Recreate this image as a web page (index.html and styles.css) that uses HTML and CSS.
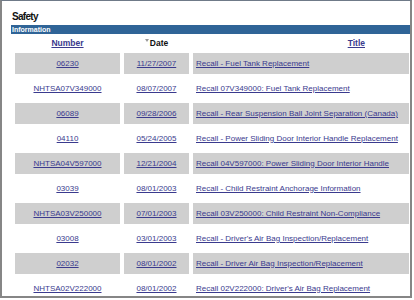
FILE: index.html
```html
<!DOCTYPE html>
<html>
<head>
<meta charset="utf-8">
<link rel="stylesheet" href="styles.css">
</head>
<body>
<div class="frame">
  <h1 class="title">Safety</h1>
  <div class="bar">Information</div>
  <table class="list">
    <colgroup><col class="c-num"><col class="c-date"><col class="c-title"></colgroup>
    <thead>
      <tr>
        <th><a href="#">Number</a></th>
        <th class="sorted"><span class="arrow"></span>Date</th>
        <th class="th-title"><a href="#">Title</a></th>
      </tr>
    </thead>
    <tbody>
      <tr class="alt"><td class="num"><a href="#">06230</a></td><td class="date"><a href="#">11/27/2007</a></td><td class="ttl"><a href="#">Recall - Fuel Tank Replacement</a></td></tr>
      <tr><td class="num"><a href="#">NHTSA07V349000</a></td><td class="date"><a href="#">08/07/2007</a></td><td class="ttl"><a href="#">Recall 07V349000: Fuel Tank Replacement</a></td></tr>
      <tr class="alt"><td class="num"><a href="#">06089</a></td><td class="date"><a href="#">09/28/2006</a></td><td class="ttl"><a href="#">Recall - Rear Suspension Ball Joint Separation (Canada)</a></td></tr>
      <tr><td class="num"><a href="#">04110</a></td><td class="date"><a href="#">05/24/2005</a></td><td class="ttl"><a href="#">Recall - Power Sliding Door Interior Handle Replacement</a></td></tr>
      <tr class="alt"><td class="num"><a href="#">NHTSA04V597000</a></td><td class="date"><a href="#">12/21/2004</a></td><td class="ttl"><a href="#">Recall 04V597000: Power Sliding Door Interior Handle</a></td></tr>
      <tr><td class="num"><a href="#">03039</a></td><td class="date"><a href="#">08/01/2003</a></td><td class="ttl"><a href="#">Recall - Child Restraint Anchorage Information</a></td></tr>
      <tr class="alt"><td class="num"><a href="#">NHTSA03V250000</a></td><td class="date"><a href="#">07/01/2003</a></td><td class="ttl"><a href="#">Recall 03V250000: Child Restraint Non-Compliance</a></td></tr>
      <tr><td class="num"><a href="#">03008</a></td><td class="date"><a href="#">03/01/2003</a></td><td class="ttl"><a href="#">Recall - Driver's Air Bag Inspection/Replacement</a></td></tr>
      <tr class="alt"><td class="num"><a href="#">02032</a></td><td class="date"><a href="#">08/01/2002</a></td><td class="ttl"><a href="#">Recall - Driver Air Bag Inspection/Replacement</a></td></tr>
      <tr><td class="num"><a href="#">NHTSA02V222000</a></td><td class="date"><a href="#">08/01/2002</a></td><td class="ttl"><a href="#">Recall 02V222000: Driver's Air Bag Replacement</a></td></tr>
    </tbody>
  </table>
</div>
</body>
</html>
```

FILE: styles.css
```css
html, body {
  margin: 0;
  padding: 0;
  background: #ffffff;
}
body {
  font-family: "Liberation Sans", Arial, sans-serif;
}
.frame {
  width: 412px;
  height: 298px;
  box-sizing: border-box;
  border: 2px solid #868686;
  border-top: 1px solid #6f7a88;
  padding-left: 9px;
  overflow: hidden;
}
.title {
  margin: 10px 0 2px 1px;
  font-size: 10px;
  line-height: 12px;
  letter-spacing: -0.7px;
  font-weight: bold;
  color: #111;
}
.bar {
  height: 9px;
  line-height: 9px;
  background: #2f6497;
  color: #ffffff;
  font-size: 7px;
  font-weight: bold;
  padding-left: 1px;
}
.list {
  width: 402px;
  border-spacing: 4px;
  table-layout: fixed;
}
.c-num { width: 105px; }
.c-date { width: 65px; }
.list a {
  color: #3a3a8e;
  text-decoration: underline;
}
.list th {
  height: 11px;
  padding: 0;
  font-size: 8.5px;
  line-height: 11px;
  font-weight: bold;
  text-align: center;
  color: #111;
}
.list th.th-title {
  text-align: right;
  padding-right: 44px;
}
.arrow {
  display: inline-block;
  width: 0;
  height: 0;
  border-left: 2px solid transparent;
  border-right: 2px solid transparent;
  border-top: 3px solid #999999;
  vertical-align: 4px;
  margin-right: 1px;
}
.list td {
  height: 21px;
  padding: 0;
  font-size: 8px;
  line-height: 10px;
  vertical-align: middle;
  white-space: nowrap;
}
.list td.num, .list td.date {
  text-align: center;
}
.list td.ttl {
  text-align: left;
  padding-left: 3px;
}
.list tr.alt td {
  background: #cfcfcf;
}
```
